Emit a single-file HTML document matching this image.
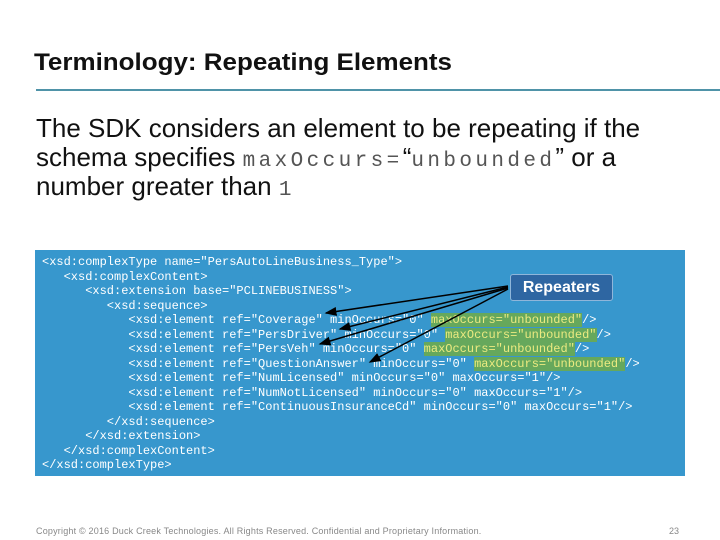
<!DOCTYPE html>
<html><head><meta charset="utf-8"><style>
body{margin:0;width:720px;height:540px;background:#fff;position:relative;overflow:hidden;font-family:"Liberation Sans",sans-serif}
.t{position:absolute;left:34px;top:49px;font-size:24.5px;font-weight:bold;color:#111;transform:scaleX(1.06);transform-origin:left}
.hr{position:absolute;left:36px;top:89px;width:684px;height:2px;background:#4f93a8}
.b{position:absolute;left:36px;top:114px;font-size:26px;line-height:29px;color:#111;width:612px}
.b code{font-family:"Liberation Mono",monospace;font-size:21px;color:#555;line-height:0;letter-spacing:3.4px}
.box{position:absolute;left:35px;top:250px;width:650px;height:226px;background:#3797cd}
pre{position:absolute;left:42px;top:255px;margin:0;font-family:"Liberation Mono",monospace;font-size:12px;line-height:14.5px;color:#fff}
.h{background:#66a85c;color:#ecea80}
.rep{position:absolute;left:510px;top:274px;width:101px;height:25px;background:#2e66a2;border:1px solid #8fb6da;border-radius:3px;color:#fff;font-weight:bold;font-size:16px;line-height:25px;text-align:center}
.f{position:absolute;left:36px;top:526px;font-size:9px;color:#888;letter-spacing:0.2px}
.n{position:absolute;left:669px;top:526px;font-size:9px;color:#888}
</style></head><body>
<div class="t">Terminology: Repeating Elements</div>
<div class="hr"></div>
<div class="b">The SDK considers an element to be repeating if the schema specifies <code>maxOccurs=</code>“<code>unbounded</code>” or a number greater than <code>1</code></div>
<div class="box"></div>
<pre>&lt;xsd:complexType name="PersAutoLineBusiness_Type"&gt;
   &lt;xsd:complexContent&gt;
      &lt;xsd:extension base="PCLINEBUSINESS"&gt;
         &lt;xsd:sequence&gt;
            &lt;xsd:element ref="Coverage" minOccurs="0" <span class="h">maxOccurs="unbounded"</span>/&gt;
            &lt;xsd:element ref="PersDriver" minOccurs="0" <span class="h">maxOccurs="unbounded"</span>/&gt;
            &lt;xsd:element ref="PersVeh" minOccurs="0" <span class="h">maxOccurs="unbounded"</span>/&gt;
            &lt;xsd:element ref="QuestionAnswer" minOccurs="0" <span class="h">maxOccurs="unbounded"</span>/&gt;
            &lt;xsd:element ref="NumLicensed" minOccurs="0" maxOccurs="1"/&gt;
            &lt;xsd:element ref="NumNotLicensed" minOccurs="0" maxOccurs="1"/&gt;
            &lt;xsd:element ref="ContinuousInsuranceCd" minOccurs="0" maxOccurs="1"/&gt;
         &lt;/xsd:sequence&gt;
      &lt;/xsd:extension&gt;
   &lt;/xsd:complexContent&gt;
&lt;/xsd:complexType&gt;</pre>
<svg style="position:absolute;left:0;top:0" width="720" height="540">
<defs><marker id="a" markerWidth="8" markerHeight="6" refX="7" refY="3" orient="auto"><path d="M0,0 L8,3 L0,6 Z" fill="#000"/></marker></defs>
<g stroke="#000" stroke-width="1.5" fill="none" marker-end="url(#a)">
<line x1="508" y1="286" x2="326" y2="313"/>
<line x1="508" y1="287" x2="340" y2="329"/>
<line x1="508" y1="288" x2="320" y2="344"/>
<line x1="508" y1="289" x2="370" y2="362"/>
</g></svg>
<div class="rep">Repeaters</div>
<div class="f">Copyright © 2016 Duck Creek Technologies. All Rights Reserved. Confidential and Proprietary Information.</div>
<div class="n">23</div>
</body></html>
